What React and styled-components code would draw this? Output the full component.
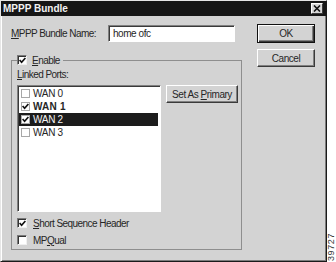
import React from 'react';
import styled, { createGlobalStyle } from 'styled-components';

const GlobalStyle = createGlobalStyle`
  html, body {
    margin: 0;
    padding: 0;
    background: #ffffff;
  }
  body {
    font-family: "Liberation Sans", Arial, sans-serif;
    font-size: 10px;
    color: #262626;
  }
`;

const Page = styled.div`
  display: flex;
  width: 336px;
  height: 262px;
  overflow: hidden;
`;

const Dialog = styled.div`
  flex: none;
  box-sizing: border-box;
  width: 327px;
  height: 262px;
  background: #d3d3d3;
  border: 1px solid;
  border-color: #e6e6e6 #1a1a1a #1a1a1a #e6e6e6;
  box-shadow: inset 1px 1px #ffffff, inset -1px -1px #7c7c7c;
  display: flex;
  flex-direction: column;
`;

const TitleBar = styled.div`
  height: 15px;
  background: #161616;
  color: #f2f2f2;
  font-weight: bold;
  font-size: 10px;
  display: flex;
  align-items: center;
  justify-content: space-between;
  padding: 0 3px 0 2px;
`;

const CloseButton = styled.div`
  box-sizing: border-box;
  width: 12px;
  height: 11px;
  background: #d6d6d6;
  border: 1px solid;
  border-color: #ffffff #3a3a3a #3a3a3a #ffffff;
  display: flex;
  align-items: center;
  justify-content: center;
`;

const Body = styled.div`
  display: flex;
  padding: 8px 0 0 10px;
  gap: 15px;
`;

const LeftColumn = styled.div`
  width: 231px;
  display: flex;
  flex-direction: column;
`;

const RightColumn = styled.div`
  width: 58px;
  display: flex;
  flex-direction: column;
  gap: 6px;
`;

const FieldRow = styled.div`
  display: flex;
  align-items: center;
  height: 17px;
  margin-top: 1px;
`;

const Label = styled.span`
  letter-spacing: -0.55px;
  white-space: nowrap;
  width: ${p => (p.$width ? `${p.$width}px` : 'auto')};
  flex: none;
`;

const TextBox = styled.div`
  box-sizing: border-box;
  width: 127px;
  height: 17px;
  background: #ffffff;
  border: 1px solid;
  border-color: #808080 #ffffff #ffffff #808080;
  box-shadow: inset 1px 1px #3a3a3a;
  padding: 0 3px 0 4px;
  display: flex;
  align-items: center;
  letter-spacing: -0.45px;
`;

const Group = styled.fieldset`
  box-sizing: border-box;
  margin: 12px 0 0;
  padding: 0 3px 3px 5px;
  width: 231px;
  border: 1px solid #8e8e8e;
  min-width: 0;
`;

const Legend = styled.legend`
  display: flex;
  align-items: center;
  gap: 5px;
  height: 12px;
  padding: 0 3px 0 0;
  margin-left: 0;
`;

const SectionLabel = styled(Label)`
  display: block;
  height: 12px;
  line-height: 12px;
  margin-top: 3px;
`;

const PortsGrid = styled.div`
  display: grid;
  grid-template-columns: 144px 72px;
  column-gap: 5px;
  align-items: start;
  margin-top: 4px;
`;

const ListBox = styled.div`
  box-sizing: border-box;
  height: 127px;
  background: #ffffff;
  border: 1px solid;
  border-color: #808080 #ffffff #ffffff #808080;
  box-shadow: inset 1px 1px #3a3a3a;
  padding: 1px 2px 0 1px;
`;

const ListItem = styled.div`
  display: flex;
  align-items: center;
  gap: 3px;
  height: 13px;
  padding-left: 2px;
  background: ${p => (p.$selected ? '#1c1c1c' : 'transparent')};
  color: ${p => (p.$selected ? '#f4f4f4' : '#262626')};
  font-weight: ${p => (p.$bold ? 'bold' : 'normal')};
  letter-spacing: ${p => (p.$bold ? '0.2px' : '-0.3px')};
`;

const FlatBox = styled.span`
  box-sizing: border-box;
  width: 9px;
  height: 9px;
  flex: none;
  background: #ffffff;
  border: 1px solid #a8a8a8;
  display: flex;
  align-items: center;
  justify-content: center;
`;

const SunkenBox = styled.span`
  box-sizing: border-box;
  width: 10px;
  height: 10px;
  flex: none;
  background: #ffffff;
  border: 1px solid;
  border-color: #7a7a7a #f0f0f0 #f0f0f0 #7a7a7a;
  box-shadow: inset 1px 1px #333333;
  display: flex;
  align-items: center;
  justify-content: center;
`;

const Button = styled.div`
  box-sizing: border-box;
  height: ${p => p.$height}px;
  background: #d3d3d3;
  border: 1px solid;
  border-color: ${p => (p.$default ? '#111111' : '#ffffff #3a3a3a #3a3a3a #ffffff')};
  box-shadow: ${p =>
    p.$default
      ? 'inset 1px 1px #ffffff, inset -1px -1px #3a3a3a, inset -2px -2px #808080'
      : 'inset -1px -1px #808080'};
  display: flex;
  align-items: center;
  justify-content: center;
  letter-spacing: -0.45px;
  white-space: nowrap;
`;

const CheckRow = styled.div`
  display: flex;
  align-items: center;
  gap: 6px;
  height: 12px;
  margin-top: ${p => p.$top}px;
`;

const SideNote = styled.div`
  flex: 1;
  display: flex;
  flex-direction: column;
  justify-content: flex-end;
  align-items: center;
  padding-bottom: 1px;
`;

const SideText = styled.span`
  writing-mode: vertical-rl;
  transform: rotate(180deg);
  font-size: 9px;
  line-height: 9px;
  color: #333333;
  letter-spacing: 0.6px;
`;

const Check = ({ color = '#111111' }) => (
  <svg width="7" height="7" viewBox="0 0 7 7">
    <polyline points="0.6,3 2.6,5.2 6.4,1" fill="none" stroke={color} strokeWidth="1.7" />
  </svg>
);

const Checkbox = ({ checked }) => (
  <SunkenBox>{checked && <Check />}</SunkenBox>
);

const ports = [
  { name: 'WAN 0', checked: false },
  { name: 'WAN 1', checked: true, bold: true },
  { name: 'WAN 2', checked: true, selected: true },
  { name: 'WAN 3', checked: false },
];

const App = () => (
  <Page>
    <GlobalStyle />
    <Dialog>
      <TitleBar>
        <span>MPPP Bundle</span>
        <CloseButton>
          <svg width="8" height="7" viewBox="0 0 8 7">
            <path d="M1 0.5 L7 6.5 M7 0.5 L1 6.5" stroke="#111" strokeWidth="1.6" />
          </svg>
        </CloseButton>
      </TitleBar>
      <Body>
        <LeftColumn>
          <FieldRow>
            <Label $width={97}><u>M</u>PPP Bundle Name:</Label>
            <TextBox>home ofc</TextBox>
          </FieldRow>
          <Group>
            <Legend>
              <Checkbox checked />
              <Label><u>E</u>nable</Label>
            </Legend>
            <SectionLabel><u>L</u>inked Ports:</SectionLabel>
            <PortsGrid>
              <ListBox>
                {ports.map(p => (
                  <ListItem key={p.name} $selected={p.selected} $bold={p.bold}>
                    <FlatBox>{p.checked && <Check />}</FlatBox>
                    <span>{p.name}</span>
                  </ListItem>
                ))}
              </ListBox>
              <Button $height={18}>
                <span>Set As <u>P</u>rimary</span>
              </Button>
            </PortsGrid>
            <CheckRow $top={5}>
              <Checkbox checked />
              <Label><u>S</u>hort Sequence Header</Label>
            </CheckRow>
            <CheckRow $top={5}>
              <Checkbox />
              <Label>MP<u>Q</u>ual</Label>
            </CheckRow>
          </Group>
        </LeftColumn>
        <RightColumn>
          <Button $default $height={19}>OK</Button>
          <Button $height={18}>Cancel</Button>
        </RightColumn>
      </Body>
    </Dialog>
    <SideNote>
      <SideText>39727</SideText>
    </SideNote>
  </Page>
);

export default App;
